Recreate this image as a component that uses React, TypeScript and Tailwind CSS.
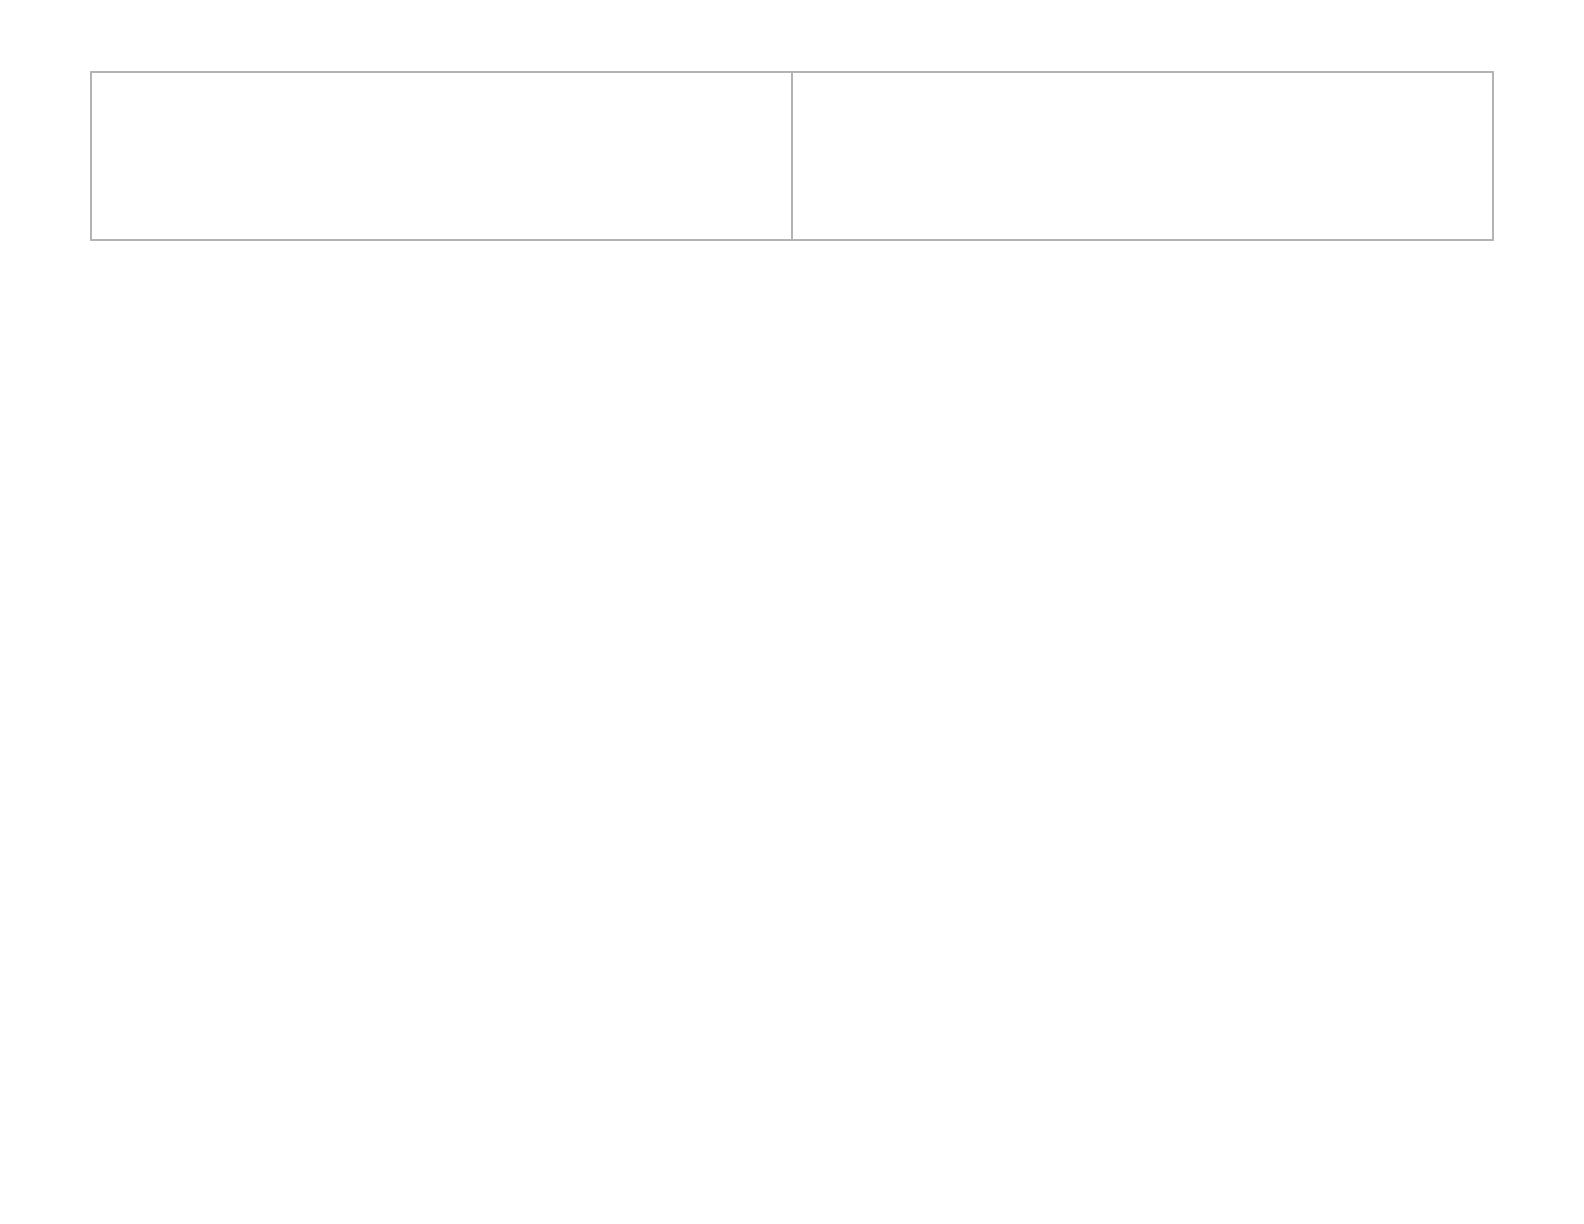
export default function App() {
  return (
    <div className="min-h-[1224px] w-full bg-white pt-[71px] pl-[90px]">
      <div className="flex h-[170px] w-[1404px] border-2 border-[#b3b3b3] bg-white">
        <div className="w-[699px]" />
        <div className="w-[699px] border-l-2 border-[#b3b3b3]" />
      </div>
    </div>
  );
}
